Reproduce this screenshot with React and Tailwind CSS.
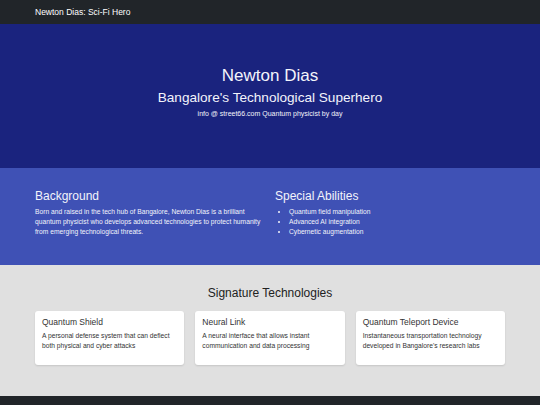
import React from 'react';

const abilities = ['Quantum field manipulation', 'Advanced AI integration', 'Cybernetic augmentation'];

const technologies = [
  { title: 'Quantum Shield', text: 'A personal defense system that can deflect both physical and cyber attacks' },
  { title: 'Neural Link', text: 'A neural interface that allows instant communication and data processing' },
  { title: 'Quantum Teleport Device', text: "Instantaneous transportation technology developed in Bangalore's research labs" },
];

const App = () => {
  return (
    <div className="w-[540px] min-h-[405px] bg-[#212529] font-['Liberation_Sans',Arial,sans-serif]">
      {/* Navbar */}
      <nav className="h-[24px] bg-[#212529] flex items-center px-[35px]">
        <span className="text-[8.5px] text-white leading-none">Newton Dias: Sci-Fi Hero</span>
      </nav>

      {/* Hero */}
      <header className="h-[144px] bg-[#1a237e] flex flex-col items-center justify-center pb-[8px] text-[#f3f4fb]">
        <h1 className="text-[17px] leading-[20px]">Newton Dias</h1>
        <h2 className="text-[13.6px] leading-[16px] mt-[4px]">Bangalore's Technological Superhero</h2>
        <p className="text-[7px] leading-[9px] mt-[3px]">info @ street66.com Quantum physicist by day</p>
      </header>

      {/* About */}
      <section className="h-[97px] bg-[#3f51b5] px-[35px] pt-[21px] text-[#f3f4fb]">
        <div className="grid grid-cols-2 gap-[10px]">
          <div>
            <h3 className="text-[12px] leading-[14px] mb-[4px]">Background</h3>
            <p className="text-[6.7px] leading-[10px]">
              Born and raised in the tech hub of Bangalore, Newton Dias is a brilliant quantum physicist who develops advanced technologies to protect humanity from emerging technological threats.
            </p>
          </div>
          <div>
            <h3 className="text-[12px] leading-[14px] mb-[4px]">Special Abilities</h3>
            <ul className="list-disc pl-[14px] text-[6.7px] leading-[10px]">
              {abilities.map((item) => (
                <li key={item}>{item}</li>
              ))}
            </ul>
          </div>
        </div>
      </section>

      {/* Technologies */}
      <section className="h-[131px] bg-[#e0e0e0] px-[35px] pt-[21px]">
        <h3 className="text-[12px] leading-[14px] text-center text-[#222] mb-[11px]">Signature Technologies</h3>
        <div className="grid grid-cols-3 gap-[11px]">
          {technologies.map((tech) => (
            <div key={tech.title} className="h-[54px] bg-white rounded-[3px] shadow-[0_1px_2px_rgba(0,0,0,0.12)] px-[7px] pt-[6px]">
              <h4 className="text-[8.5px] leading-[10px] text-[#333] mb-[4px]">{tech.title}</h4>
              <p className="text-[6.7px] leading-[10px] text-[#333]">{tech.text}</p>
            </div>
          ))}
        </div>
      </section>

      {/* Footer */}
      <footer className="h-[9px] bg-[#212529]" />
    </div>
  );
};

export default App;
